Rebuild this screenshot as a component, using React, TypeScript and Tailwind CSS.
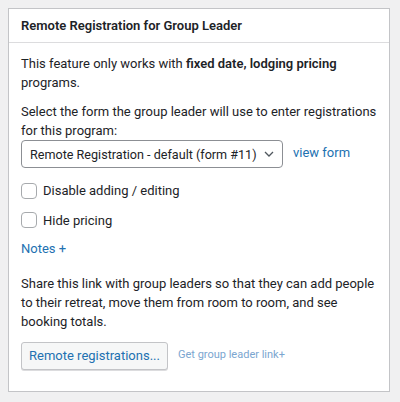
import React from "react";

export default function App() {
  return (
    <div
      className="w-[400px] h-[402px] bg-[#f0f0f1] pt-[8px] pl-[8px] pr-[10px] text-[#1d2327]"
      style={{ fontFamily: "Roboto, 'Liberation Sans', sans-serif" }}
    >
      <div className="h-[384px] bg-white border border-[#c3c4c7] flex flex-col">
        <div className="h-[34px] border-b border-[#dcdcde] px-[12px] flex items-center">
          <h2 className="text-[13px] font-semibold leading-none">Remote Registration for Group Leader</h2>
        </div>
        <div className="px-[12px] text-[13px] leading-[19px]">
          <p className="mt-[11px]">
            This feature only works with <b className="font-semibold">fixed date, lodging pricing</b> programs.
          </p>
          <p className="mt-[10px]">Select the form the group leader will use to enter registrations for this program:</p>
          <div className="mt-0 flex items-center gap-[10px]">
            <div className="w-[262px] h-[28px] border border-[#8c8f94] rounded-[4px] flex items-center justify-between pl-[8px] pr-[8px] text-[12.6px] whitespace-nowrap">
              <span>Remote Registration - default (form #11)</span>
              <svg width="10" height="6" viewBox="0 0 10 6" fill="none">
                <path d="M1 1l4 4 4-4" stroke="#50575e" strokeWidth="1.3" />
              </svg>
            </div>
            <a className="text-[#2271b1] text-[13px] -mt-[3px]">view form</a>
          </div>
          <label className="mt-[13px] flex items-center gap-[6px] text-[13px]">
            <span className="w-[16px] h-[16px] border border-[#a7aaad] rounded-[4px] bg-white" />
            <span>Disable adding / editing</span>
          </label>
          <label className="mt-[10.5px] flex items-center gap-[6px] text-[13px]">
            <span className="w-[16px] h-[16px] border border-[#a7aaad] rounded-[4px] bg-white" />
            <span>Hide pricing</span>
          </label>
          <a className="block mt-[9px] text-[#2271b1]">Notes +</a>
          <p className="mt-[16px]">
            Share this link with group leaders so that they can add people to their retreat, move them from room to room, and see booking totals.
          </p>
          <div className="mt-[11px] flex items-center gap-[10px]">
            <button className="w-[147px] h-[28px] border border-[#c3c4c7] rounded-[3px] bg-[#f6f7f7] text-[#2271b1] text-[13px] shadow-[0_1px_0_#dcdcde]">
              Remote registrations...
            </button>
            <a className="text-[#7ba6d0] text-[11px] -mt-[3px]">Get group leader link+</a>
          </div>
        </div>
      </div>
    </div>
  );
}
